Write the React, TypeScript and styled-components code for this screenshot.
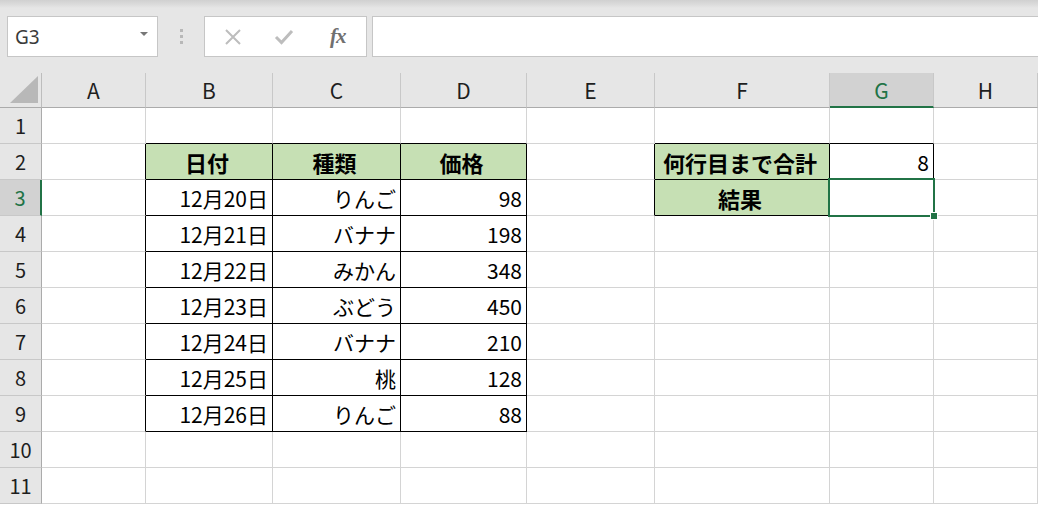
import React from "react";
import styled, { createGlobalStyle } from "styled-components";

const GlobalStyle = createGlobalStyle`
  html, body {
    margin: 0;
    padding: 0;
    background: #e6e6e6;
    overflow: hidden;
  }
  body {
    font-family: "Noto Sans CJK JP", "Noto Sans", sans-serif;
  }
`;

const Window = styled.div`
  width: 1038px;
  height: 505px;
  overflow: hidden;
  background: #fff;
`;

const FormulaBar = styled.div`
  height: 73px;
  box-sizing: border-box;
  padding: 16px 0 16px 7px;
  background: linear-gradient(#d0d0d0 0, #dadada 4px, #e6e6e6 8px);
  display: flex;
  align-items: stretch;
  overflow: hidden;
`;

const NameBox = styled.div`
  width: 151px;
  box-sizing: border-box;
  border: 1px solid #c6c6c6;
  background: #fff;
  display: flex;
  align-items: center;
  justify-content: space-between;
  padding: 0 9px 0 7px;
  font-family: "Noto Sans", sans-serif;
  font-size: 19px;
  color: #3a3a3a;
`;

const DropArrow = styled.span`
  width: 0;
  height: 0;
  border-left: 4px solid transparent;
  border-right: 4px solid transparent;
  border-top: 4px solid #777;
  margin-top: -6px;
`;

const Grip = styled.div`
  width: 46px;
  display: flex;
  flex-direction: column;
  align-items: center;
  justify-content: center;
  gap: 3px;
`;

const GripDot = styled.span`
  width: 3px;
  height: 3px;
  background: #b8b8b8;
`;

const FxBox = styled.div`
  width: 163px;
  box-sizing: border-box;
  border: 1px solid #c6c6c6;
  background: #fff;
  display: flex;
  align-items: center;
  padding-left: 3px;
`;

const FxSlot = styled.span<{ $w: number }>`
  width: ${(p) => p.$w}px;
  display: flex;
  justify-content: center;
  align-items: center;
`;

const FxLabel = styled.span`
  font-family: "Liberation Serif", "DejaVu Serif", serif;
  font-style: italic;
  font-weight: bold;
  font-size: 21px;
  color: #707070;
  letter-spacing: -1px;
`;

const FormulaInput = styled.div`
  flex: 1;
  margin-left: 5px;
  margin-right: -2px;
  border: 1px solid #c6c6c6;
  background: #fff;
`;

const Sheet = styled.div`
  display: grid;
  grid-template-columns: 42px 104px 127px 128px 126px 128px 175px 104px 1fr;
  grid-template-rows: 35px repeat(11, 36px);
  font-family: "Noto Sans CJK JP", "Noto Sans", sans-serif;
`;

const Corner = styled.div`
  background: #e6e6e6;
  border-right: 1px solid #bdbdbd;
  border-bottom: 1px solid #ababab;
  box-sizing: border-box;
  display: flex;
  align-items: flex-end;
  justify-content: flex-end;
  padding: 0 3px 4px 0;
`;

const ColHeader = styled.div<{ $active?: boolean }>`
  box-sizing: border-box;
  background: ${(p) => (p.$active ? "#d2d2d2" : "#e6e6e6")};
  border-right: 1px solid #c8c8c8;
  border-bottom: ${(p) => (p.$active ? "2px solid #217346" : "1px solid #ababab")};
  color: ${(p) => (p.$active ? "#217346" : "#1e1e1e")};
  font-size: 21px;
  display: flex;
  align-items: center;
  justify-content: center;
`;

const RowHeader = styled.div<{ $active?: boolean }>`
  box-sizing: border-box;
  background: ${(p) => (p.$active ? "#d2d2d2" : "#e6e6e6")};
  border-right: ${(p) => (p.$active ? "2px solid #217346" : "1px solid #ababab")};
  border-bottom: 1px solid #c8c8c8;
  color: ${(p) => (p.$active ? "#217346" : "#1e1e1e")};
  font-size: 20px;
  display: flex;
  align-items: center;
  justify-content: center;
`;

const Cell = styled.div<{ $right: string; $bottom: string; $head?: boolean }>`
  position: relative;
  box-sizing: border-box;
  background: ${(p) => (p.$head ? "#c6e0b4" : "#fff")};
  border-right: 1px solid ${(p) => p.$right};
  border-bottom: 1px solid ${(p) => p.$bottom};
  color: #000;
  font-size: ${(p) => (p.$head ? 22 : 21)}px;
  font-weight: ${(p) => (p.$head ? 700 : 400)};
  display: flex;
  align-items: center;
  justify-content: ${(p) => (p.$head ? "center" : "flex-end")};
  padding: 0 4px 0 0;
  white-space: nowrap;
`;

const Selection = styled.div`
  position: absolute;
  top: -2px;
  left: -2px;
  right: -2px;
  bottom: -2px;
  border: 2px solid #217346;
  pointer-events: none;
  z-index: 2;
`;

const FillHandle = styled.span`
  position: absolute;
  right: -5px;
  bottom: -5px;
  width: 6px;
  height: 6px;
  background: #217346;
  border: 1px solid #fff;
`;

const columns = ["A", "B", "C", "D", "E", "F", "G", "H"];

const fruits: [string, string, string][] = [
  ["12月20日", "りんご", "98"],
  ["12月21日", "バナナ", "198"],
  ["12月22日", "みかん", "348"],
  ["12月23日", "ぶどう", "450"],
  ["12月24日", "バナナ", "210"],
  ["12月25日", "桃", "128"],
  ["12月26日", "りんご", "88"],
];

type CellData = { text: string; head?: boolean };

const cells: Record<string, CellData> = {
  B2: { text: "日付", head: true },
  C2: { text: "種類", head: true },
  D2: { text: "価格", head: true },
  F2: { text: "何行目まで合計", head: true },
  G2: { text: "8" },
  F3: { text: "結果", head: true },
};
fruits.forEach((f, i) => {
  cells[`B${i + 3}`] = { text: f[0] };
  cells[`C${i + 3}`] = { text: f[1] };
  cells[`D${i + 3}`] = { text: f[2] };
});

// c: 0 = A ... 7 = H
const inTable = (r: number, c: number) =>
  (r >= 2 && r <= 9 && c >= 1 && c <= 3) || (r >= 2 && r <= 3 && c >= 5 && c <= 6);

const GRID = "#d4d4d4";
const LINE = "#000";

function CornerTriangle() {
  return (
    <svg width="28" height="27" viewBox="0 0 28 27">
      <polygon points="28,0 28,27 0,27" fill="#b8b8b8" />
    </svg>
  );
}

export default function App() {
  const rows = Array.from({ length: 11 }, (_, i) => i + 1);
  return (
    <Window>
      <GlobalStyle />
      <FormulaBar>
        <NameBox>
          <span>G3</span>
          <DropArrow />
        </NameBox>
        <Grip>
          <GripDot />
          <GripDot />
          <GripDot />
        </Grip>
        <FxBox>
          <FxSlot $w={52}>
            <svg width="18" height="18" viewBox="0 0 18 18">
              <path d="M2 2 L16 16 M16 2 L2 16" stroke="#bdbdbd" strokeWidth="2" />
            </svg>
          </FxSlot>
          <FxSlot $w={52}>
            <svg width="20" height="16" viewBox="0 0 20 16">
              <path d="M2 8 L7.5 13.5 L18 2" stroke="#bdbdbd" strokeWidth="3" fill="none" />
            </svg>
          </FxSlot>
          <FxSlot $w={58}>
            <FxLabel>fx</FxLabel>
          </FxSlot>
        </FxBox>
        <FormulaInput />
      </FormulaBar>
      <Sheet>
        <Corner>
          <CornerTriangle />
        </Corner>
        {columns.map((col) => (
          <ColHeader key={col} $active={col === "G"}>
            {col}
          </ColHeader>
        ))}
        {rows.map((r) => (
          <React.Fragment key={r}>
            <RowHeader $active={r === 3}>{r}</RowHeader>
            {columns.map((col, c) => {
              const id = `${col}${r}`;
              const data = cells[id];
              const right = inTable(r, c) || inTable(r, c + 1) ? LINE : GRID;
              const bottom = inTable(r, c) || inTable(r + 1, c) ? LINE : GRID;
              return (
                <Cell key={id} $right={right} $bottom={bottom} $head={data?.head}>
                  {data?.text}
                  {id === "G3" && (
                    <Selection>
                      <FillHandle />
                    </Selection>
                  )}
                </Cell>
              );
            })}
          </React.Fragment>
        ))}
      </Sheet>
    </Window>
  );
}
